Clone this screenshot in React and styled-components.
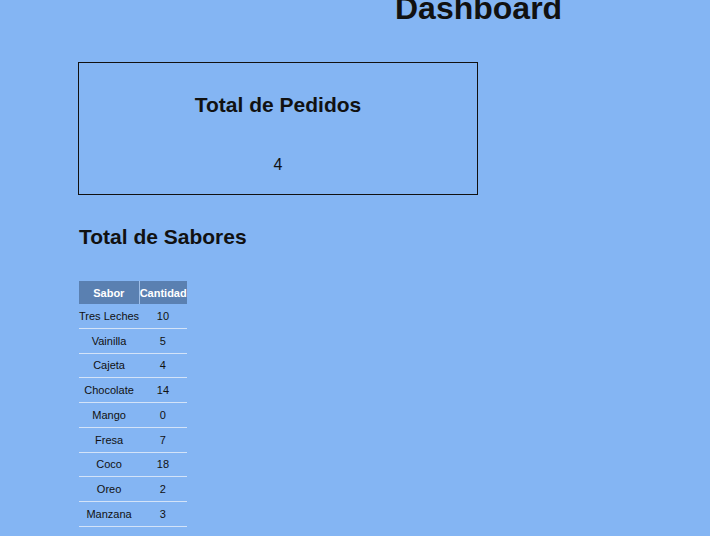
import React from "react";
import styled, { createGlobalStyle } from "styled-components";

const GlobalStyle = createGlobalStyle`
  html, body {
    margin: 0;
    padding: 0;
    background: #84b5f3;
    font-family: "Liberation Sans", Arial, sans-serif;
    color: #111;
    overflow: hidden;
  }
`;

const Page = styled.div`
  padding: 0 0 0 78px;
  min-height: 536px;
`;

const Title = styled.h1`
  margin: -10px 0 0 317px;
  font-size: 32px;
  line-height: 37px;
  font-weight: bold;
`;

const Card = styled.div`
  box-sizing: border-box;
  width: 400px;
  height: 133px;
  margin-top: 35px;
  border: 1px solid #111;
  padding-top: 30px;
  text-align: center;
`;

const CardTitle = styled.h2`
  margin: 0;
  font-size: 21px;
  line-height: 23px;
  font-weight: bold;
`;

const CardValue = styled.p`
  margin: 40px 0 0;
  font-size: 16px;
  line-height: 18px;
`;

const SectionTitle = styled.h2`
  margin: 30px 0 0 1px;
  font-size: 21px;
  line-height: 23px;
  font-weight: bold;
`;

const Table = styled.table`
  margin: 33px 0 0 1px;
  border-collapse: collapse;
  font-size: 11px;
  white-space: nowrap;
`;

const Th = styled.th`
  background: #5a80b1;
  color: #fff;
  font-weight: bold;
  height: 23px;
  padding: 0;
  border-left: ${(p) => (p.$divider ? "1px solid #9ebde6" : "none")};
`;

const Td = styled.td`
  text-align: center;
  padding: 0;
  height: 23.75px;
  border-bottom: 1px solid #d3e3f8;
`;

const sabores = [
  ["Tres Leches", 10],
  ["Vainilla", 5],
  ["Cajeta", 4],
  ["Chocolate", 14],
  ["Mango", 0],
  ["Fresa", 7],
  ["Coco", 18],
  ["Oreo", 2],
  ["Manzana", 3],
];

export default function App() {
  return (
    <React.Fragment>
      <GlobalStyle />
      <Page>
        <Title>Dashboard</Title>
        <Card>
          <CardTitle>Total de Pedidos</CardTitle>
          <CardValue>4</CardValue>
        </Card>
        <SectionTitle>Total de Sabores</SectionTitle>
        <Table>
          <thead>
            <tr>
              <Th>Sabor</Th>
              <Th $divider>Cantidad</Th>
            </tr>
          </thead>
          <tbody>
            {sabores.map(([sabor, cantidad]) => (
              <tr key={sabor}>
                <Td>{sabor}</Td>
                <Td>{cantidad}</Td>
              </tr>
            ))}
          </tbody>
        </Table>
      </Page>
    </React.Fragment>
  );
}
